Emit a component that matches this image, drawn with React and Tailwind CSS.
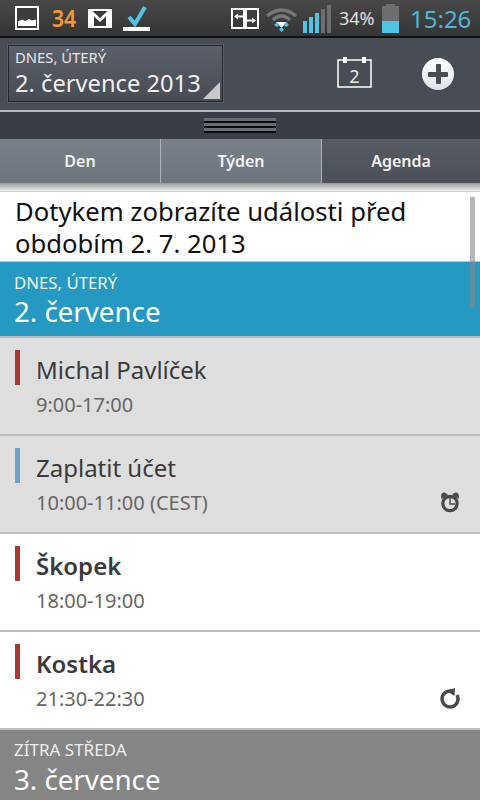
import React from "react";

function Event({ bg, bar, title, time, bold, icon }) {
  return (
    <div className={`h-[98px] ${bg} flex border-b-2 border-[#bdbdbd] relative`}>
      <div className={`w-[5px] h-[35px] ml-[15px] mt-[12px] ${bar}`} />
      <div className="ml-[16px] flex flex-col">
        <div className={`text-[24px] leading-[32px] mt-[16px] text-[#3a3a3a] ${bold ? "font-semibold" : ""}`}>{title}</div>
        <div className="text-[20px] leading-[24px] mt-[7px] text-[#666666]">{time}</div>
      </div>
      {icon && <div className="ml-auto mr-[18px] mt-[54px] w-[24px] h-[24px]">{icon}</div>}
    </div>
  );
}

const Alarm = () => (
  <svg viewBox="0 0 24 24" width="24" height="24" fill="none">
    <path d="M3.500 9 Q2 3.500 5.500 2.500 Q8 2 10 5 Z M20.500 9 Q22 3.500 18.500 2.500 Q16 2 14 5 Z" fill="#4a4a4a" />
    <circle cx="12" cy="13.500" r="7.200" stroke="#4a4a4a" strokeWidth="3.200" />
    <path d="M12 8v6h5" stroke="#4a4a4a" strokeWidth="1.500" />
  </svg>
);

const Repeat = () => (
  <svg viewBox="0 0 24 24" width="24" height="24" fill="none">
    <path d="M13 5 A8 8 0 1 0 19 9" stroke="#4a4a4a" strokeWidth="3.400" />
    <path d="M17 2 L8 4.700 L16.500 10 Z" fill="#4a4a4a" />
  </svg>
);

function Bar({ h, on }) {
  return <div className={`w-[4px] ${h} ${on ? "bg-[#4ec5e2]" : "bg-[#6e6e6e]"}`} />;
}

function StatusBar() {
  return (
    <div className="h-[38px] bg-gradient-to-b from-[#484848] to-[#353535] border-b-2 border-[#111111] flex items-center relative overflow-hidden shrink-0">
      <svg className="ml-[15px] shrink-0" width="24" height="24" viewBox="0 0 24 24">
        <rect x="1" y="1" width="22" height="22" fill="#3c3c3c" stroke="#ffffff" strokeWidth="2" />
        <path d="M3 20V15.500L7 13.500L10 15L14 13L17 14.500L21 13.500V20Z" fill="#ffffff" />
      </svg>
      <span className="ml-[13px] w-[24px] text-[24px] leading-none font-semibold text-[#f69a2b] scale-x-[0.88] origin-left">34</span>
      <svg className="ml-[12px] shrink-0" width="24" height="19" viewBox="0 0 24 19">
        <rect x="0" y="0" width="24" height="19" fill="#ffffff" />
        <rect x="2" y="2" width="20" height="15" fill="#3b3b3b" />
        <path d="M2 2H4.500L12 9L19.500 2H22V17H18V7.500L12 13L6 7.500V17H2Z" fill="#ffffff" />
      </svg>
      <svg className="ml-[11px] shrink-0" width="27" height="27" viewBox="0 0 27 27">
        <path d="M6 12L12 19L22 2" stroke="#4ec5e2" strokeWidth="4" fill="none" />
        <rect x="0" y="22" width="27" height="4" fill="#ffffff" />
      </svg>
      <svg className="ml-[81px] shrink-0" width="28" height="21" viewBox="0 0 28 21">
        <rect x="1" y="1" width="12" height="19" fill="none" stroke="#ffffff" strokeWidth="2" />
        <rect x="15" y="1" width="12" height="19" fill="none" stroke="#ffffff" strokeWidth="2" />
        <path d="M3 8.500L7 5.500V7.500H13V9.500H7V11.500ZM15 11.500H21V9.500L25 12.500L21 15.500V13.500H15Z" fill="#ffffff" />
      </svg>
      <svg className="ml-[6px] shrink-0 mt-[2px]" width="33" height="25" viewBox="0 0 33 25">
        <path d="M2 9 Q16.500 -3 31 9" stroke="#777777" strokeWidth="3.500" fill="none" />
        <path d="M8 13 Q16.500 5 25 13" stroke="#777777" strokeWidth="3.500" fill="none" />
        <path d="M11 15h11l-5.500 6Z" fill="#ffffff" />
        <path d="M9 18l3 -3 2 3-2 2ZM24 18l-3 -3-2 3 2 2ZM16.500 20l2.500 2.500-2.500 2.500-2.500-2.500Z" fill="#4ec5e2" />
      </svg>
      <div className="ml-[5px] flex items-end gap-[2px] h-[28px] self-end mb-[3px]">
        <Bar h="h-[12px]" on />
        <Bar h="h-[16px]" on />
        <Bar h="h-[20px]" on />
        <Bar h="h-[24px]" />
        <Bar h="h-[28px]" />
      </div>
      <span className="ml-[8px] w-[36px] text-[18px] leading-none text-[#e0e0e0] whitespace-nowrap">34%</span>
      <div className="ml-[7px] w-[17px] h-[29px] mt-[1px] flex flex-col items-center">
        <div className="w-[9px] h-[2px] bg-[#6e6e6e]" />
        <div className="w-[17px] h-[15px] bg-[#6e6e6e]" />
        <div className="w-[17px] h-[12px] bg-[#4ec5e2]" />
      </div>
      <span className="ml-[11px] text-[24px] leading-none text-[#4ab8d6] mt-[1px]">15:26</span>
    </div>
  );
}

function Header() {
  return (
    <div className="h-[72px] bg-[#484c55] flex items-start relative shrink-0">
      <div className="ml-[8px] mt-[7px] w-[215px] h-[57px] bg-gradient-to-b from-[#5c606a] to-[#474b54] border border-[#23252a] shadow-[0_0_0_1px_#5a5e67] relative pl-[6px] overflow-hidden">
        <div className="text-[14.800px] leading-[18px] mt-[2px] text-[#e6e6e6]">DNES, ÚTERÝ</div>
        <div className="text-[23.700px] leading-[28px] mt-[3px] text-[#f0f0f0] whitespace-nowrap">2. července 2013</div>
        <div className="absolute right-[2px] bottom-[2px] w-0 h-0 border-l-[17px] border-l-transparent border-b-[17px] border-b-[#c8c8c8]" />
      </div>
      <svg className="ml-[114px] mt-[19px] shrink-0" width="35" height="31" viewBox="0 0 35 31">
        <rect x="1" y="3" width="33" height="27" fill="none" stroke="#ffffff" strokeWidth="1.500" />
        <rect x="6" y="0" width="4" height="6" fill="#ffffff" />
        <rect x="25" y="0" width="4" height="6" fill="#ffffff" />
        <text x="17.500" y="26" textAnchor="middle" fontSize="18" fill="#e8e8e8" fontFamily="Noto Sans">2</text>
      </svg>
      <div className="ml-[50px] mt-[20px] w-[32px] h-[32px] rounded-full bg-gradient-to-b from-[#ffffff] to-[#dfe4ea] flex items-center justify-center relative shrink-0">
        <div className="w-[20px] h-[5px] bg-[#484c55] rounded-[1px]" />
        <div className="absolute w-[5px] h-[20px] bg-[#484c55] rounded-[1px]" />
      </div>
    </div>
  );
}

function Tab({ children, dark, width }) {
  return (
    <div className={`${width} flex items-center justify-center text-[16px] font-semibold text-[#f4f4f4] ${dark ? "bg-gradient-to-b from-[#565b64] to-[#4c5059]" : "bg-gradient-to-b from-[#7a808a] to-[#6e747e] border-r border-[#b0b4ba]"}`}>
      {children}
    </div>
  );
}

function HandleLine() {
  return (
    <div>
      <div className="h-[3px] bg-[#6a6e75]" />
      <div className="h-[2px] bg-[#0c0c0e]" />
    </div>
  );
}

export default function App() {
  return (
    <div className="w-[480px] h-[800px] overflow-hidden bg-white relative flex flex-col" style={{ fontFamily: '"Noto Sans", sans-serif' }}>
      <StatusBar />
      <Header />
      <div className="h-[29px] bg-[#3a3d45] border-t-2 border-[#b5b8bd] flex items-center justify-center shrink-0">
        <div className="w-[72px] flex flex-col">
          <HandleLine />
          <HandleLine />
          <HandleLine />
        </div>
      </div>
      <div className="h-[44px] flex shrink-0">
        <Tab width="w-[161px]">Den</Tab>
        <Tab width="w-[161px]">Týden</Tab>
        <Tab width="flex-1" dark>Agenda</Tab>
      </div>
      <div className="h-[9px] bg-gradient-to-b from-[#9a9a9a] to-[#f0f0f0] border-b border-[#d0d0d0] shrink-0" />
      <div className="h-[69px] px-[15px] pt-[4px] text-[25.650px] leading-[32px] text-[#111111] shrink-0">
        Dotykem zobrazíte události před<br />obdobím 2. 7. 2013
      </div>
      <div className="h-[77px] bg-[#2599c2] pl-[14px] border-t border-[#c0c0c0] border-b-[2px] border-b-[#b8bcbd] text-white shrink-0">
        <div className="text-[16.800px] leading-[20px] mt-[11px] text-[#eef7fa]">DNES, ÚTERÝ</div>
        <div className="text-[27.700px] leading-[34px] mt-[1px]">2. července</div>
      </div>
      <Event bg="bg-[#dedede]" bar="bg-[#a83a35]" title="Michal Pavlíček" time="9:00-17:00" />
      <Event bg="bg-[#dedede]" bar="bg-[#6fa0c8]" title="Zaplatit účet" time="10:00-11:00 (CEST)" icon={<Alarm />} />
      <Event bg="bg-white" bar="bg-[#a83a35]" title="Škopek" bold time="18:00-19:00" />
      <Event bg="bg-white" bar="bg-[#a83a35]" title="Kostka" bold time="21:30-22:30" icon={<Repeat />} />
      <div className="flex-1 bg-[#858585] pl-[14px] text-white">
        <div className="text-[17px] leading-[20px] mt-[10px] text-[#eeeeee]">ZÍTRA STŘEDA</div>
        <div className="text-[27.700px] leading-[34px] mt-[2px]">3. července</div>
      </div>
      <div className="absolute left-[470px] top-[197px] w-[5px] h-[111px] bg-[#888888]/60" />
    </div>
  );
}
